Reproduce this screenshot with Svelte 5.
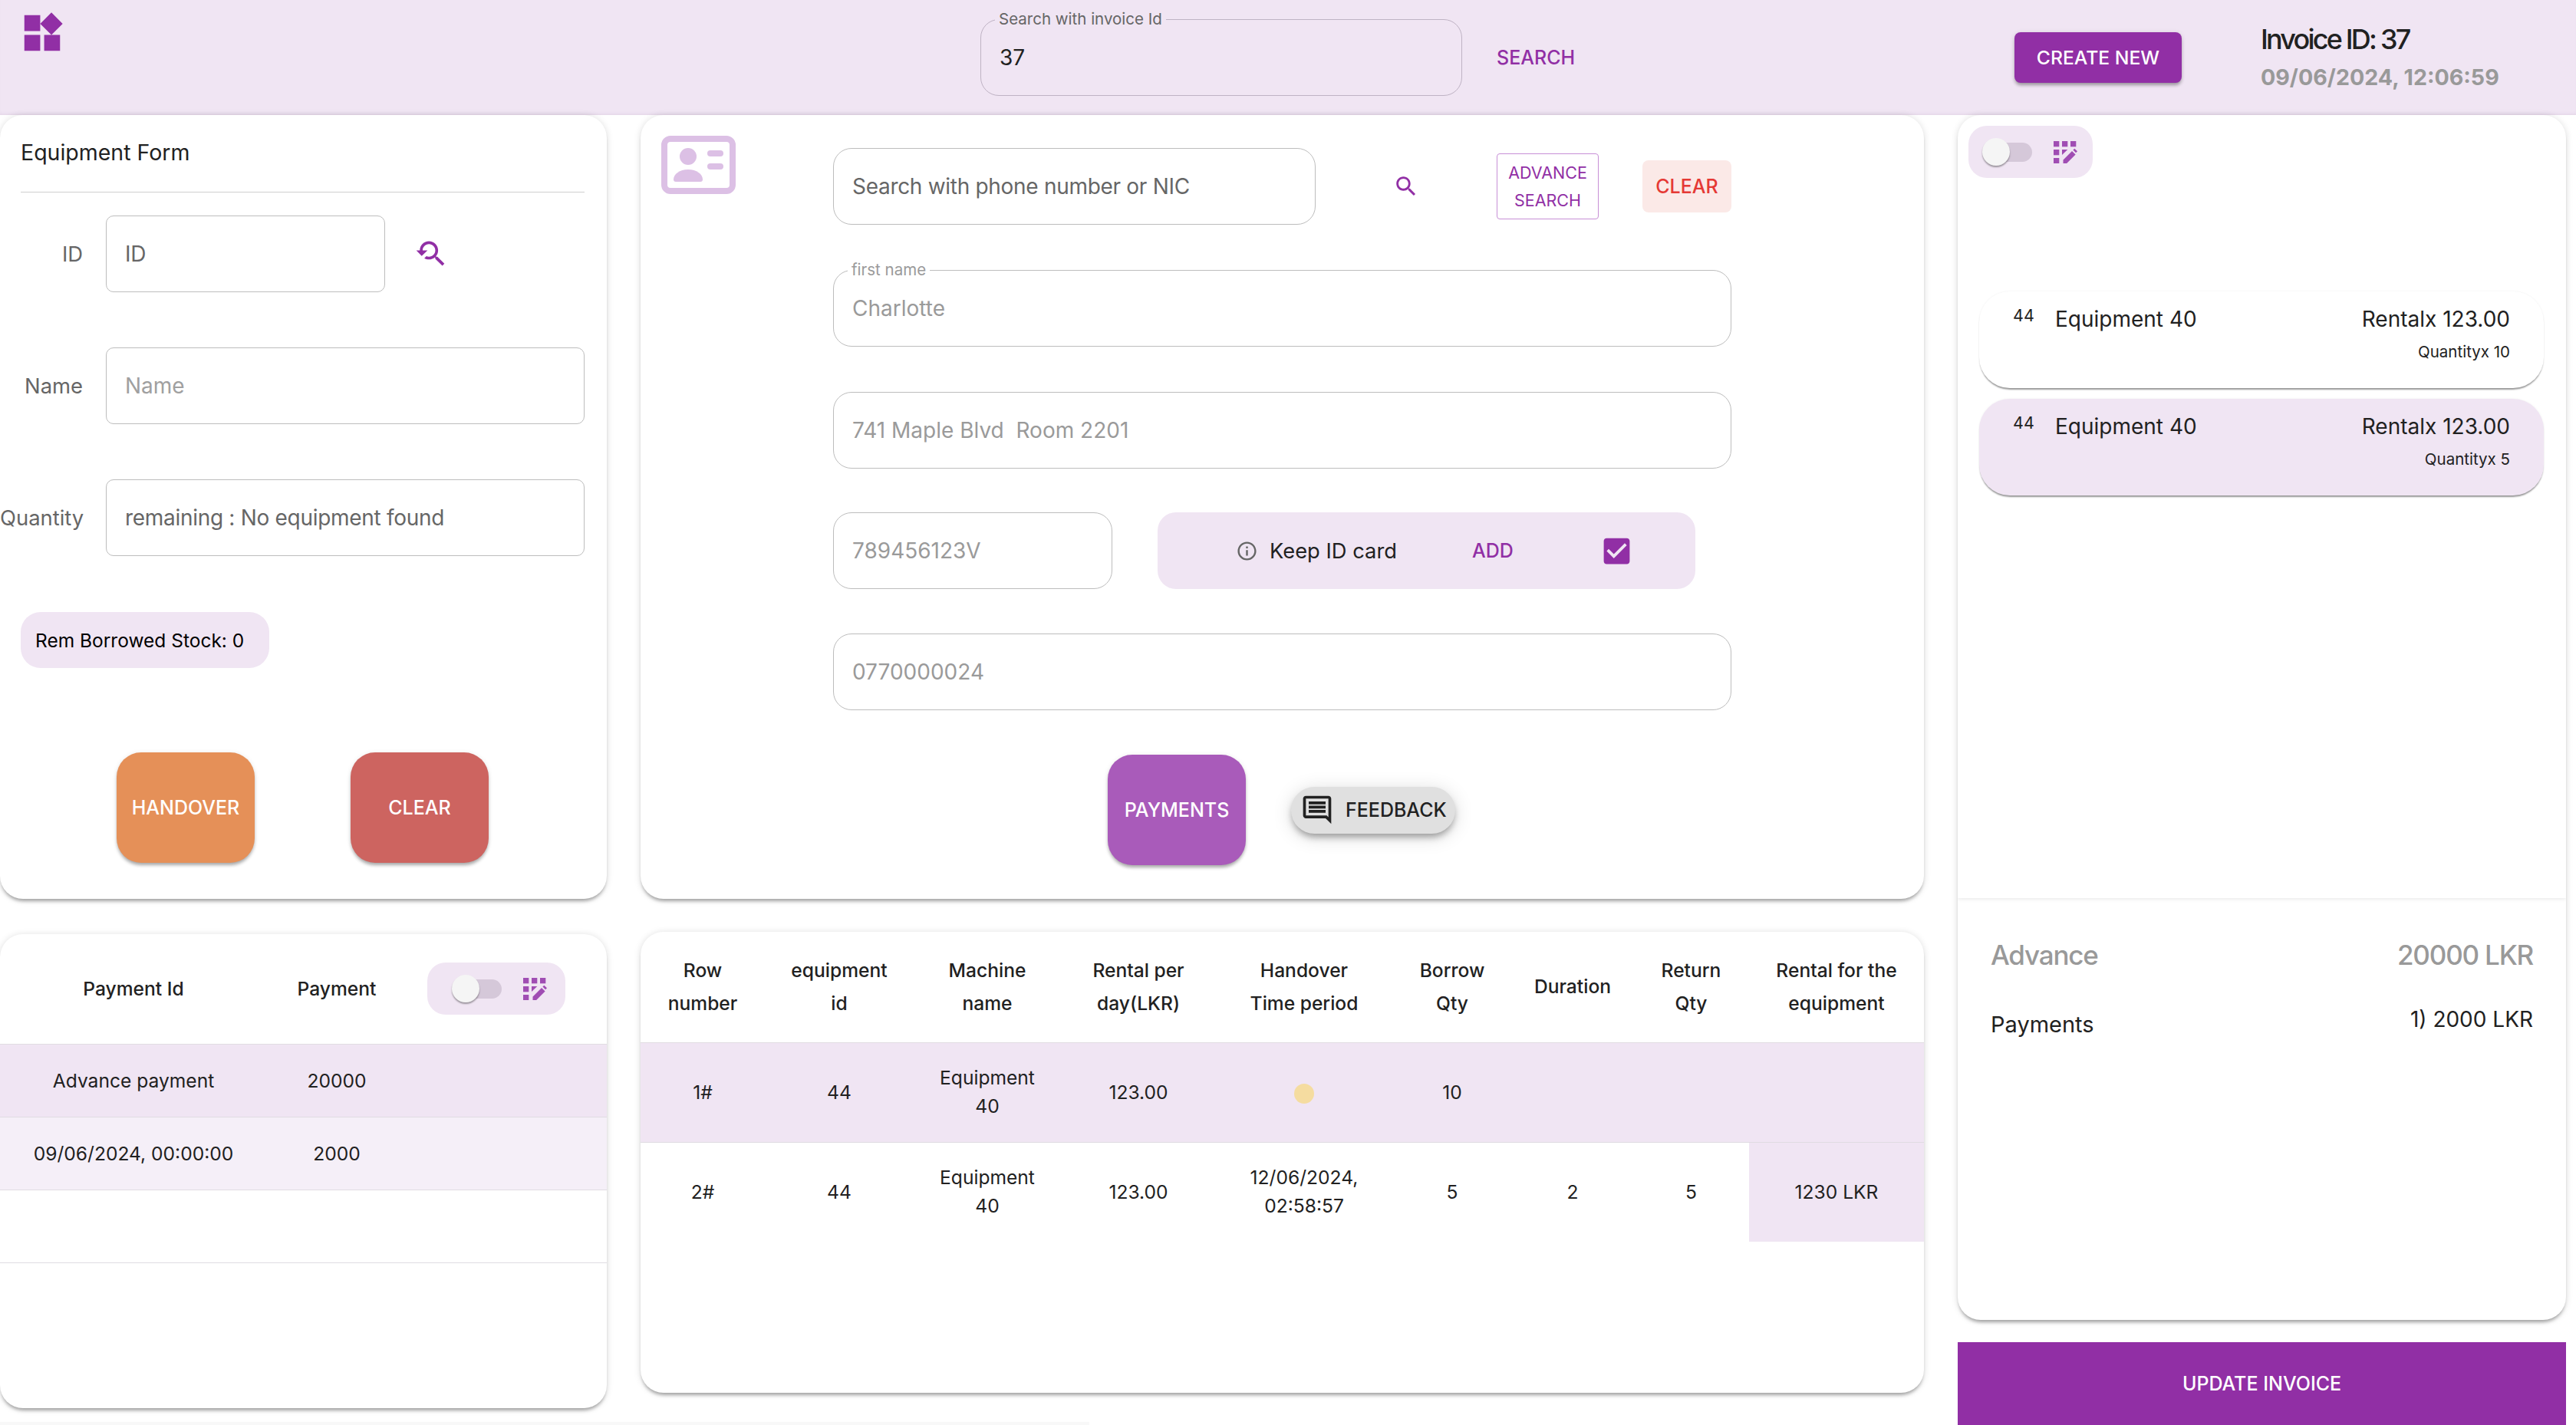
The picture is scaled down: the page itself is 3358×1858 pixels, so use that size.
<script lang="ts">
const pencilGrid = [[0, 0], [11, 0], [22, 0], [0, 11], [0, 22]]

const items = [
    { id: 44, name: 'Equipment 40', rental: 'Rentalx 123.00', qty: 'Quantityx 10', active: false },
    { id: 44, name: 'Equipment 40', rental: 'Rentalx 123.00', qty: 'Quantityx 5', active: true }
]

const payments = [
    { id: 'Advance payment', amount: '20000', cls: 'row-a' },
    { id: '09/06/2024, 00:00:00', amount: '2000', cls: 'row-b' },
    { id: '', amount: '', cls: 'row-empty' }
]

const columns = [162, 194, 192, 202, 230, 156, 158, 151, 228]
const headings = [
    ['Row', 'number'], ['equipment', 'id'], ['Machine', 'name'], ['Rental per', 'day(LKR)'],
    ['Handover', 'Time period'], ['Borrow', 'Qty'], ['Duration'], ['Return', 'Qty'], ['Rental for the', 'equipment']
]
</script>

{#snippet gridToggle()}
    <div class="toggle-pill">
        <span class="track"><span class="thumb"></span></span>
        <svg class="grid-icon" viewBox="0 0 31 29" width="31" height="29" fill="#a04db3">
            {#each pencilGrid as p}
                <rect x={p[0]} y={p[1]} width="7.3" height="7.3" />
            {/each}
            <path d="M11 11h7.3l-7.3 7z" />
            <path d="M12.5 29v-4.6L24 13l4.6 4.6L17.1 29zM25.4 11.6l1.9-1.9 3.7 3.5-2 2z" />
        </svg>
    </div>
{/snippet}

<header>
    <svg class="logo" viewBox="0 0 24 24" width="62" height="62" fill="#912fa5">
        <path d="M13 13v8h8v-8h-8zM3 21h8v-8H3v8zM3 3v8h8V3H3zm13.66-1.31L11 7.34 16.66 13l5.66-5.66-5.66-5.65z" />
    </svg>
    <div class="field invoice-field">
        <label for="invoice" class="float-label on-tint">Search with invoice Id</label>
        <input id="invoice" value="37" readonly />
    </div>
    <div class="search-cell"><button class="text-btn">SEARCH</button></div>
    <div class="create-cell"><button class="create">CREATE NEW</button></div>
    <div class="invoice-info">
        <div class="invoice-id">Invoice ID: 37</div>
        <div class="invoice-date">09/06/2024, 12:06:59</div>
    </div>
</header>

<main>
    <div class="col col-left">
        <section class="card equipment">
            <h2>Equipment Form</h2>
            <hr />
            <div class="form-row first">
                <label for="eq-id">ID</label>
                <input id="eq-id" class="short dark-ph" placeholder="ID" />
                <svg class="history" viewBox="0 0 24 24" width="44" height="44" fill="#912fa5">
                    <path d="M17.01 14h-.8l-.27-.27c.98-1.14 1.57-2.61 1.57-4.23 0-3.59-2.91-6.5-6.5-6.5s-6.5 3-6.5 6.5H2l3.84 4 4.16-4H6.51C6.51 7 8.53 5 11.01 5s4.5 2.01 4.5 4.5c0 2.48-2.02 4.5-4.5 4.5-.65 0-1.26-.14-1.82-.38L7.71 15.1c.97.57 2.09.9 3.3.9 1.61 0 3.08-.59 4.22-1.57l.27.27v.79l5.01 5L21.99 19l-4.98-5z" />
                </svg>
            </div>
            <div class="form-row">
                <label for="eq-name">Name</label>
                <input id="eq-name" placeholder="Name" />
            </div>
            <div class="form-row">
                <label for="eq-qty">Quantity</label>
                <input id="eq-qty" class="dark-ph" placeholder="remaining : No equipment found" />
            </div>
            <div class="stock-chip">Rem Borrowed Stock: 0</div>
            <div class="action-row">
                <button class="square orange">HANDOVER</button>
                <button class="square red">CLEAR</button>
            </div>
        </section>

        <section class="card payments">
            <table>
                <colgroup><col style="width:348px" /><col style="width:182px" /><col /></colgroup>
                <thead>
                    <tr>
                        <th>Payment Id</th>
                        <th>Payment</th>
                        <th class="pill-cell">{@render gridToggle()}</th>
                    </tr>
                </thead>
                <tbody>
                    {#each payments as row}
                        <tr class={row.cls}>
                            <td>{row.id}</td>
                            <td>{row.amount}</td>
                            <td></td>
                        </tr>
                    {/each}
                </tbody>
            </table>
        </section>
    </div>

    <div class="col col-mid">
        <section class="card customer">
            <svg class="id-icon" viewBox="0 0 97 76" width="97" height="76" fill="#dcc0e5">
                <rect x="4" y="4" width="89" height="68" rx="8" fill="none" stroke="#dcc0e5" stroke-width="8" />
                <circle cx="35" cy="27" r="11" />
                <path d="M19 60c-2 0-3-1-3-3 0-7 8-13 19-13s19 6 19 13c0 2-1 3-3 3z" />
                <rect x="60" y="19" width="21" height="8" rx="4" />
                <rect x="60" y="36" width="21" height="8" rx="4" />
            </svg>
            <div class="customer-form">
                <div class="search-row">
                    <input class="round phone-search dark-ph" placeholder="Search with phone number or NIC" />
                    <svg class="search-icon" viewBox="0 0 24 24" width="34" height="34" fill="#912fa5">
                        <path d="M15.5 14h-.79l-.28-.27C15.41 12.59 16 11.11 16 9.5 16 5.91 13.09 3 9.5 3S3 5.91 3 9.5 5.91 16 9.5 16c1.61 0 3.09-.59 4.23-1.57l.27.28v.79l5 4.99L20.49 19l-4.99-5zm-6 0C7.01 14 5 11.99 5 9.5S7.01 5 9.5 5 14 7.01 14 9.5 11.99 14 9.5 14z" />
                    </svg>
                    <button class="advance">ADVANCE<br />SEARCH</button>
                    <button class="clear-soft">CLEAR</button>
                </div>
                <div class="field name-field">
                    <label for="first-name" class="float-label">first name</label>
                    <input id="first-name" class="round muted" value="Charlotte" readonly />
                </div>
                <input class="round muted block" value="741 Maple Blvd  Room 2201" readonly />
                <div class="nic-row">
                    <input class="round muted nic" value="789456123V" readonly />
                    <div class="keep-pill">
                        <svg viewBox="0 0 24 24" width="29" height="29" fill="#666">
                            <path d="M11 7h2v2h-2zm0 4h2v6h-2zm1-9C6.48 2 2 6.48 2 12s4.48 10 10 10 10-4.48 10-10S17.52 2 12 2zm0 18c-4.41 0-8-3.59-8-8s3.59-8 8-8 8 3.59 8 8-3.59 8-8 8z" />
                        </svg>
                        <span class="keep-text">Keep ID card</span>
                        <button class="text-btn add">ADD</button>
                        <svg class="check" viewBox="0 0 24 24" width="45" height="45" fill="#912fa5">
                            <path d="M19 3H5c-1.11 0-2 .9-2 2v14c0 1.1.89 2 2 2h14c1.11 0 2-.9 2-2V5c0-1.1-.89-2-2-2zm-9 14l-5-5 1.41-1.41L10 14.17l7.59-7.59L19 8l-9 9z" />
                        </svg>
                    </div>
                </div>
                <input class="round muted block" value="0770000024" readonly />
                <div class="pay-row">
                    <button class="square purple">PAYMENTS</button>
                    <button class="feedback">
                        <svg viewBox="0 0 24 24" width="44" height="44" fill="#212121">
                            <path d="M21.99 4c0-1.1-.89-2-1.99-2H4c-1.1 0-2 .9-2 2v12c0 1.1.9 2 2 2h14l4 4-.01-18zM20 4v13.17L18.83 16H4V4h16zM6 12h12v2H6zm0-3h12v2H6zm0-3h12v2H6z" />
                        </svg>
                        FEEDBACK
                    </button>
                </div>
            </div>
        </section>

        <section class="card rentals">
            <table>
                <colgroup>
                    {#each columns as w}
                        <col style="width:{w}px" />
                    {/each}
                </colgroup>
                <thead>
                    <tr>
                        {#each headings as h}
                            <th>{h[0]}{#if h[1]}<br />{h[1]}{/if}</th>
                        {/each}
                    </tr>
                </thead>
                <tbody>
                    <tr class="row-a">
                        <td>1#</td>
                        <td>44</td>
                        <td>Equipment<br />40</td>
                        <td>123.00</td>
                        <td><span class="dot"></span></td>
                        <td>10</td>
                        <td></td>
                        <td></td>
                        <td></td>
                    </tr>
                    <tr>
                        <td>2#</td>
                        <td>44</td>
                        <td>Equipment<br />40</td>
                        <td>123.00</td>
                        <td>12/06/2024,<br />02:58:57</td>
                        <td>5</td>
                        <td>2</td>
                        <td>5</td>
                        <td class="row-a">1230 LKR</td>
                    </tr>
                </tbody>
            </table>
        </section>
    </div>

    <div class="col col-right">
        <section class="card summary">
            <div class="summary-top">
                {@render gridToggle()}
                <div class="items">
                    {#each items as item}
                        <div class="item" class:active={item.active}>
                            <span class="item-id">{item.id}</span>
                            <span class="item-name">{item.name}</span>
                            <div class="item-right">
                                <div class="item-rental">{item.rental}</div>
                                <div class="item-qty">{item.qty}</div>
                            </div>
                        </div>
                    {/each}
                </div>
            </div>
            <div class="summary-bottom">
                <div class="advance-line"><span>Advance</span><span>20000 LKR</span></div>
                <div class="payments-line"><span class="pay-label">Payments</span><span class="pay-value">1) 2000 LKR</span></div>
            </div>
        </section>
        <button class="update">UPDATE INVOICE</button>
    </div>
</main>
<div class="fold-edge"></div>

<style>
:global(body) {
    margin: 0;
    background: #fff;
    font-family: Inter, "Noto Sans", sans-serif;
    color: #212121;
}

button {
    font-family: inherit;
    border: none;
    cursor: pointer;
    padding: 0;
}

input {
    font-family: inherit;
    font-size: 28px;
    color: #212121;
    box-sizing: border-box;
    height: 100px;
    border: 1px solid #bdbdbd;
    border-radius: 10px;
    padding: 0 24px;
    background: transparent;
    outline: none;
    min-width: 0;
}

input::placeholder {
    color: #a0a0a0;
    opacity: 1;
}

input.dark-ph::placeholder {
    color: #666;
    letter-spacing: -0.3px;
}

input.round {
    border-radius: 24px;
}

input.muted {
    color: #9a9a9a;
}

input.block {
    display: block;
    width: 100%;
}

header {
    height: 150px;
    background: #f0e5f3;
    display: grid;
    grid-template-columns: 1278px 628px 720px 321px 1fr;
    align-items: center;
    box-shadow: inset 0 -4px 4px -3px rgba(120, 80, 130, .12);
}

.logo {
    align-self: start;
    margin: 12px 0 0 24px;
}

.field {
    position: relative;
}

.field input {
    width: 100%;
}

.invoice-field {
    height: 100px;
}

.invoice-field input {
    border-radius: 24px;
    border-color: #bfb3c4;
}

.float-label {
    position: absolute;
    top: -13px;
    left: 19px;
    padding: 0 5px;
    font-size: 20.5px;
    line-height: 26px;
    color: #666;
    background: #fff;
}

.float-label.on-tint {
    background: #f0e5f3;
}

.name-field .float-label {
    color: #9a9a9a;
}

.text-btn {
    background: none;
    color: #912fa5;
    font-size: 25px;
    font-weight: 500;
}

.search-cell {
    padding-left: 45px;
}

.create {
    width: 218px;
    height: 66px;
    background: #912fa5;
    color: #fff;
    font-size: 24.7px;
    font-weight: 500;
    border-radius: 8px;
    box-shadow: 0 4px 4px -1px rgba(0, 0, 0, .3), 0 1px 6px rgba(0, 0, 0, .12);
}

.invoice-info {
    align-self: start;
}

.invoice-id {
    margin-top: 29px;
    font-size: 36px;
    line-height: 44px;
    font-weight: 500;
    letter-spacing: -2.8px;
}

.invoice-date {
    margin-top: 9px;
    font-size: 28.6px;
    line-height: 38px;
    font-weight: 700;
    color: #999;
}

main {
    display: grid;
    grid-template-columns: 791px 1673px 793px;
    column-gap: 44px;
}

.col {
    display: flex;
    flex-direction: column;
}

.card {
    background: #fff;
    border-radius: 30px;
    box-shadow: 0 5px 4px -2px rgba(0, 0, 0, .3), 0 1px 10px rgba(0, 0, 0, .14);
    box-sizing: border-box;
    overflow: hidden;
}

.equipment {
    height: 1022px;
    padding: 0 29px 0 27px;
}

.equipment h2 {
    margin: 0;
    padding-top: 32px;
    font-size: 28.5px;
    line-height: 34px;
    font-weight: 400;
}

.equipment hr {
    margin: 34px 0 0;
    border: none;
    border-top: 1px solid #cfcfcf;
}

.form-row {
    display: flex;
    align-items: center;
    margin-left: -27px;
    margin-top: 72px;
}

.form-row.first {
    margin-top: 30px;
}

.form-row label {
    flex: none;
    width: 108px;
    margin-right: 30px;
    text-align: right;
    font-size: 27.4px;
    color: #666;
    white-space: nowrap;
}

.form-row input {
    flex: 1;
}

.form-row input.short {
    flex: none;
    width: 364px;
}

.history {
    margin-left: 37px;
}

.stock-chip {
    display: inline-flex;
    align-items: center;
    box-sizing: border-box;
    height: 73px;
    width: 324px;
    margin-top: 73px;
    padding-left: 19px;
    background: #f0e5f3;
    border-radius: 26px;
    font-size: 24.5px;
    color: #000;
    white-space: nowrap;
}

.action-row {
    display: flex;
    gap: 125px;
    margin-top: 110px;
    margin-left: 125px;
}

.square {
    width: 180px;
    height: 144px;
    border-radius: 32px;
    color: #fff;
    font-size: 25px;
    font-weight: 500;
    box-shadow: 0 4px 4px -1px rgba(0, 0, 0, .3), 0 1px 6px rgba(0, 0, 0, .1);
}

.orange { background: #e59058; }
.red { background: #cd6460; }
.purple { background: #a95bba; }

.payments {
    height: 618px;
    margin-top: 46px;
}

table {
    width: 100%;
    border-collapse: collapse;
    table-layout: fixed;
}

th, td {
    padding: 0;
    text-align: center;
    border-bottom: 1px solid #e0dce2;
    font-size: 24.6px;
}

th {
    font-weight: 500;
}

.payments thead tr {
    height: 143px;
}

.payments tbody tr {
    height: 95px;
}

.pill-cell {
    text-align: left;
    padding-left: 27px;
}

.row-a { background: #f0e5f3; }
.row-b { background: #f5eff8; }

.toggle-pill {
    box-sizing: border-box;
    display: flex;
    align-items: center;
    width: 162px;
    height: 68px;
    padding-left: 24px;
    background: #f0e5f3;
    border-radius: 24px;
}

.payments .toggle-pill {
    width: 180px;
    padding-left: 38px;
}

.track {
    display: block;
    position: relative;
    width: 59px;
    height: 25px;
    background: #d5c8d9;
    border-radius: 13px;
}

.thumb {
    position: absolute;
    left: -6px;
    top: -6px;
    width: 36px;
    height: 36px;
    border-radius: 50%;
    background: #f5f5f5;
    box-shadow: 0 2px 2px rgba(0, 0, 0, .35);
}

.grid-icon {
    margin-left: 28px;
}

.customer {
    height: 1022px;
    display: flex;
    align-items: flex-start;
    padding-left: 27px;
}

.id-icon {
    flex: none;
    margin-top: 27px;
}

.customer-form {
    width: 1171px;
    margin-left: 127px;
    padding-top: 43px;
}

.search-row {
    display: flex;
    align-items: center;
    height: 100px;
}

.phone-search {
    width: 629px;
    flex: none;
}

.search-icon {
    margin-left: 101px;
}

.advance {
    width: 133px;
    height: 86px;
    margin-left: 101px;
    background: #fff;
    border: 1px solid #c78fd6;
    border-radius: 4px;
    color: #912fa5;
    font-size: 21.5px;
    line-height: 36px;
}

.clear-soft {
    width: 116px;
    height: 68px;
    margin-left: 57px;
    background: #fbe9e7;
    color: #e53935;
    border-radius: 8px;
    font-size: 25px;
    font-weight: 500;
}

.name-field {
    margin-top: 59px;
    height: 100px;
}

.name-field + .block {
    margin-top: 59px;
}

.nic-row {
    display: flex;
    margin-top: 57px;
    margin-bottom: 58px;
}

.nic {
    width: 364px;
    flex: none;
}

.keep-pill {
    display: flex;
    align-items: center;
    box-sizing: border-box;
    width: 701px;
    height: 100px;
    margin-left: 59px;
    padding-left: 102px;
    background: #f0e5f3;
    border-radius: 24px;
}

.keep-text {
    margin-left: 15px;
    font-size: 27.3px;
    color: #212121;
}

.add {
    margin-left: 98px;
}

.check {
    margin-left: 112px;
}

.pay-row {
    display: flex;
    align-items: center;
    margin-top: 58px;
    margin-left: 358px;
}

.feedback {
    display: flex;
    align-items: center;
    gap: 15px;
    width: 214px;
    height: 61px;
    margin-left: 59px;
    padding-left: 12px;
    background: #e0e0e0;
    border-radius: 31px;
    color: #212121;
    font-size: 25px;
    font-weight: 500;
    box-shadow: 0 6px 10px -2px rgba(0, 0, 0, .35), 0 4px 26px rgba(0, 0, 0, .14);
}

.rentals {
    height: 601px;
    margin-top: 43px;
}

.rentals th {
    line-height: 43px;
}

.rentals thead tr {
    height: 144px;
}

.rentals tbody tr {
    height: 130px;
}

.rentals td {
    line-height: 37px;
}

.rentals tbody tr:last-child td {
    border-bottom: none;
}

.dot {
    display: inline-block;
    width: 26px;
    height: 26px;
    border-radius: 50%;
    background: #f5dca0;
    vertical-align: middle;
}

.summary {
    height: 1571px;
}

.summary-top {
    box-sizing: border-box;
    height: 1021px;
    padding: 14px 29px 0 14px;
    box-shadow: 0 1px 5px rgba(0, 0, 0, .1);
}

.items {
    margin: 148px 0 0 14px;
    display: flex;
    flex-direction: column;
    gap: 14px;
}

.item {
    display: flex;
    box-sizing: border-box;
    height: 126px;
    padding: 0 44px;
    border-radius: 40px;
    background: #fff;
    box-shadow: 0 3px 2px -1px rgba(0, 0, 0, .4), 0 0 3px rgba(0, 0, 0, .06);
}

.item.active {
    background: #f0e5f3;
}

.item-id {
    width: 55px;
    margin-top: 18px;
    font-size: 21.5px;
    line-height: 26px;
}

.item-name {
    margin-top: 19px;
    font-size: 28px;
    line-height: 34px;
}

.item-right {
    margin-left: auto;
    text-align: right;
}

.item-rental {
    margin-top: 19px;
    font-size: 28px;
    line-height: 34px;
}

.item-qty {
    margin-top: 13px;
    font-size: 20.5px;
    line-height: 26px;
}

.summary-bottom {
    padding: 50px 43px 0;
}

.advance-line {
    display: flex;
    justify-content: space-between;
    font-size: 35px;
    line-height: 48px;
    font-weight: 500;
    letter-spacing: -1.2px;
    color: #999;
}

.payments-line {
    display: flex;
    justify-content: space-between;
    align-items: flex-start;
    margin-top: 49px;
    font-size: 29px;
    line-height: 36px;
}

.pay-value {
    margin-top: -7px;
    font-size: 28px;
}

.update {
    height: 108px;
    margin-top: 29px;
    background: #912fa5;
    color: #fff;
    font-size: 25px;
    font-weight: 500;
}

.fold-edge {
    position: absolute;
    left: 0;
    top: 1854px;
    width: 1420px;
    height: 4px;
    background: #f8f8f8;
}
</style>
